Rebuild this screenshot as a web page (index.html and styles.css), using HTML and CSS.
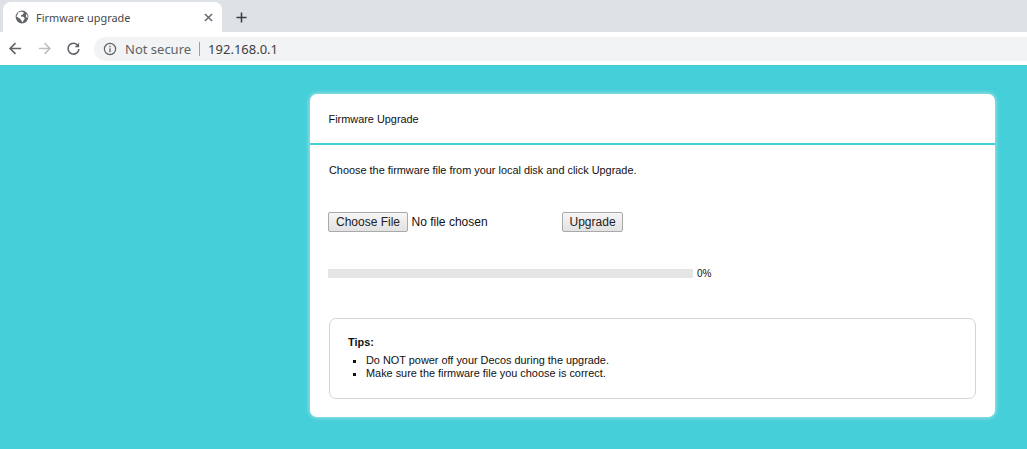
FILE: index.html
```html
<!DOCTYPE html>
<html lang="en">
<head>
<meta charset="utf-8">
<title>Firmware upgrade</title>
<link rel="stylesheet" href="styles.css">
</head>
<body>
<header class="chrome">
  <div class="tabstrip">
    <div class="tab">
      <svg class="globe" viewBox="0 0 16 16"><circle cx="8" cy="8" r="7.300" fill="#5f6368"/><path d="M4 2.600 7.400 1.600 10.200 2.800 9 5 7.200 5.600 6.800 7.400 9.800 7.800 11.200 9.800 9.600 12.200 8.200 14.400 7.200 11.600 5.400 9.800 1.600 7.400Z" fill="#fff"/><path d="M12.600 4.400 14.400 6.600 14.200 9.400 12.600 7.800Z" fill="#fff"/></svg>
      <span class="tab-title">Firmware upgrade</span>
      <svg class="tab-close" viewBox="0 0 10 10"><path d="M1 1 9 9M9 1 1 9" stroke="#5f6368" stroke-width="1.500"/></svg>
    </div>
    <svg class="newtab" viewBox="0 0 12 12"><path d="M6 .5V11.500M.5 6H11.500" stroke="#3c4043" stroke-width="1.700"/></svg>
  </div>
  <div class="toolbar">
    <svg class="nav" viewBox="0 0 16 16"><path d="M14 8H2.500M8 2.200 2.200 8 8 13.800" fill="none" stroke="#5f6368" stroke-width="1.700"/></svg>
    <svg class="nav" viewBox="0 0 16 16"><path d="M2 8H13.500M8 2.200 13.800 8 8 13.800" fill="none" stroke="#bcc0c4" stroke-width="1.700"/></svg>
    <svg class="nav" viewBox="0 0 16 16"><path d="M13 5.200A5.800 5.800 0 1 0 13.800 8.500" fill="none" stroke="#5f6368" stroke-width="1.700"/><path d="M14 1.800V6.600H9.200Z" fill="#5f6368"/></svg>
    <div class="omnibox">
      <svg class="info" viewBox="0 0 14 14"><circle cx="7" cy="7" r="5.600" fill="none" stroke="#5f6368" stroke-width="1.200"/><path d="M7 6.200V10.200M7 3.800V5.200" stroke="#5f6368" stroke-width="1.300"/></svg>
      <span class="secure">Not secure</span>
      <span class="sep"></span>
      <span class="url">192.168.0.1</span>
    </div>
  </div>
</header>
<main class="page">
  <section class="card">
    <h1 class="card-title">Firmware Upgrade</h1>
    <div class="card-body">
      <p class="intro">Choose the firmware file from your local disk and click Upgrade.</p>
      <div class="file-row">
        <button class="btn" type="button">Choose File</button>
        <span class="file-name">No file chosen</span>
        <button class="btn" type="button">Upgrade</button>
      </div>
      <div class="progress-row">
        <div class="progress"></div>
        <span class="percent">0%</span>
      </div>
      <div class="tips">
        <strong class="tips-title">Tips:</strong>
        <ul class="tips-list">
          <li>Do NOT power off your Decos during the upgrade.</li>
          <li>Make sure the firmware file you choose is correct.</li>
        </ul>
      </div>
    </div>
  </section>
</main>
</body>
</html>
```
FILE: styles.css
```css
* { box-sizing: border-box; }
html, body { margin: 0; height: 100%; overflow: hidden; }
body { background: #45cfd9; font-family: "Liberation Sans", Arial, sans-serif; color: #111; }

.chrome { background: #fff; height: 65px; }
.tabstrip { height: 32px; background: #dee1e6; padding: 2px 0 0 3px; display: flex; align-items: center; }
.tab { width: 219px; height: 30px; background: #fff; border-radius: 8px 8px 0 0; display: flex; align-items: center; padding: 0 9px 0 12px; }
.globe { width: 14px; height: 14px; flex: none; }
.tab-title { margin-left: 7px; flex: 1; font: 10.900px "Noto Sans", sans-serif; color: #45484c; }
.tab-close { width: 9px; height: 9px; }
.newtab { width: 11px; height: 11px; margin-left: 14px; }

.toolbar { height: 33px; display: flex; align-items: center; padding-left: 8px; }
.nav { width: 15px; height: 15px; margin-right: 14px; flex: none; }
.omnibox { width: 933px; height: 24px; margin-left: -1px; background: #f1f3f4; border-radius: 12px 0 0 12px; display: flex; align-items: center; padding-left: 9px; font: 13px "Noto Sans", sans-serif; }
.info { width: 14px; height: 14px; }
.secure { margin-left: 8px; color: #5f6368; }
.sep { width: 1px; height: 14px; background: #9aa0a6; margin: 0 8px; }
.url { color: #3c4043; }

.page { padding: 29px 0 0 310px; }
.card { width: 685px; height: 323px; background: #fff; border-radius: 7px; box-shadow: 0 0 5px rgba(235, 240, 240, .8); }
.card-title { margin: 0; height: 51px; padding: 18px 0 0 18.500px; font-size: 10.900px; font-weight: 400; line-height: 14px; border-bottom: 2px solid #45cfd9; }
.card-body { padding: 0 19px 0 18px; }
.intro { margin: 0; padding: 17.500px 0 0 1px; font-size: 10.900px; line-height: 14px; }

.file-row { margin-top: 35.500px; height: 20px; display: flex; align-items: center; }
.btn { height: 20px; padding: 0 7px; background: linear-gradient(#f6f6f6, #e2e2e2); border: 1px solid #a9a9a9; border-radius: 2px; font: 12px "Liberation Sans", sans-serif; color: #222; }
.btn + .file-name { width: 154px; padding-left: 3.500px; font-size: 12px; }
.file-name + .btn { padding: 0 6.500px; }

.progress-row { margin-top: 36px; display: flex; align-items: center; height: 10px; }
.progress { width: 365px; height: 9px; background: #e5e5e5; }
.percent { margin: 1px 0 0 4px; font-size: 10px; }

.tips { margin: 40px 0 0 1px; height: 81px; border: 1px solid #d4d4d4; border-radius: 7px; padding: 17px 0 0 18px; font-size: 10.900px; line-height: 13px; }
.tips-title { display: block; }
.tips-list { margin: 5px 0 0; padding: 0 0 0 18px; list-style: square; }
```
